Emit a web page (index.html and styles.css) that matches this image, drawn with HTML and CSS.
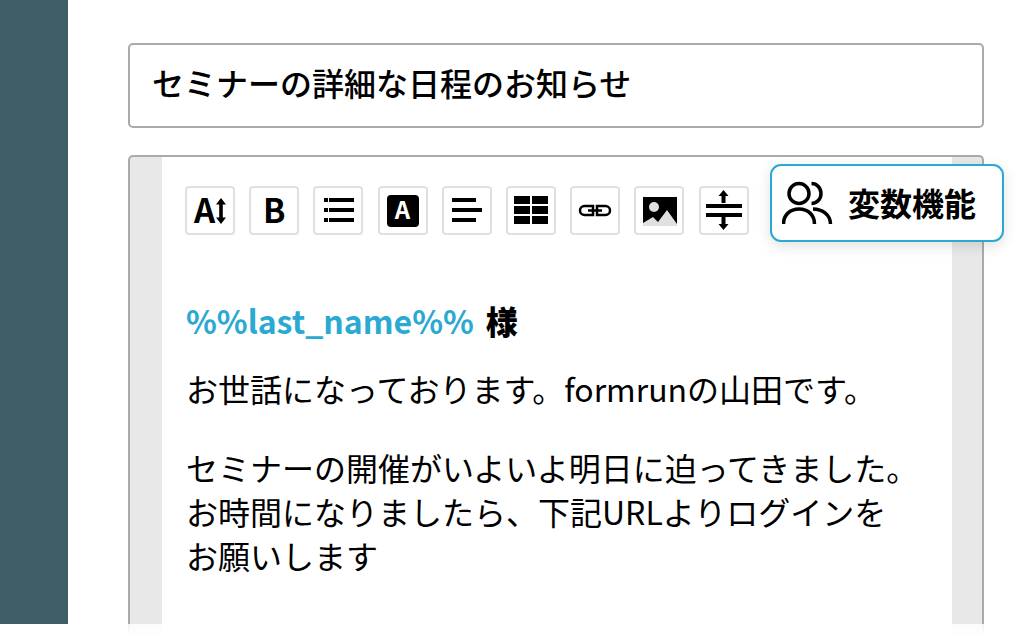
FILE: index.html
```html
<!DOCTYPE html>
<html lang="ja">
<head>
<meta charset="utf-8">
<title>formrun</title>
<link rel="stylesheet" href="styles.css">
</head>
<body>
<div class="page">
  <aside class="sidebar"></aside>
  <main class="main">
    <div class="subject">セミナーの詳細な日程のお知らせ</div>
    <section class="editor">
      <div class="sheet">
        <div class="toolbar">
          <button class="tool tool-size"><span class="glyph">A</span><svg class="arrow" viewBox="0 0 10 26" width="10" height="26"><path d="M5 0 10 6.500H6.800V19.500H10L5 26 0 19.500H3.200V6.500H0Z"/></svg></button>
          <button class="tool tool-bold"><span class="glyph">B</span></button>
          <button class="tool"><svg viewBox="315 188 46 45" width="46" height="45"><path d="M324 198h4v4h-4zM329 198h25v4h-25zM324 208h4v4h-4zM329 208h25v4h-25zM324 218h4v4h-4zM329 218h25v4h-25z"/></svg></button>
          <button class="tool"><span class="badge">A</span></button>
          <button class="tool"><svg viewBox="444 188 46 45" width="46" height="45"><path d="M452 198h24v4h-24zM452 208h30v4h-30zM452 218h24v4h-24z"/></svg></button>
          <button class="tool"><svg viewBox="508 188 46 45" width="46" height="45"><path d="M514 196h16v8h-16zM532 196h16v8h-16zM514 206h16v8h-16zM532 206h16v8h-16zM514 216h16v8h-16zM532 216h16v8h-16z"/></svg></button>
          <button class="tool"><svg viewBox="572 188 46 45" width="46" height="45"><path class="line" d="M593 206h-8.500a4.500 4.500 0 0 0 0 9h8.500zM597 206h8.500a4.500 4.500 0 0 1 0 9h-8.500zM588 210.500h14"/></svg></button>
          <button class="tool"><svg viewBox="636 188 46 45" width="46" height="45"><path d="M643 197h34v29h-34z"/><circle class="gray" cx="654" cy="207" r="5"/><path class="gray" d="M643 226v-3l10-6 5 5 9-12 10 14v2z"/></svg></button>
          <button class="tool"><svg viewBox="701 188 46 45" width="46" height="45"><path d="M706 204h36v4h-36zM706 213h36v4h-36zM723.500 190l5 6h-3v7h-4v-7h-3zM723.500 230l5-6h-3v-7h-4v7h-3z"/></svg></button>
        </div>
        <div class="body-text">
          <p class="greeting"><span class="var">%%last_name%%</span><b>様</b></p>
          <p>お世話になっております。formrunの山田です。</p>
          <p class="gap">セミナーの開催がいよいよ明日に迫ってきました。<br>お時間になりましたら、下記URLよりログインを<br>お願いします</p>
        </div>
      </div>
    </section>
  </main>
  <div class="fade"></div>
  <div class="popup">
    <svg viewBox="782 180 52 44" width="52" height="44"><g class="people"><circle cx="799" cy="193.500" r="10"/><path d="M783.500 224c0-9 6.500-15 15.500-15s15.500 6 15.500 15M811.500 183.500c5.500 0 9.500 4.500 9.500 10s-4 10-9.500 10M813 209c9.500 0 17.500 6 17.500 15"/></g></svg>
    <span>変数機能</span>
  </div>
</div>
</body>
</html>
```
FILE: styles.css
```css
* { box-sizing: border-box; }
html, body { margin: 0; padding: 0; }
body {
  width: 1024px;
  height: 640px;
  overflow: hidden;
  background: #fff;
  color: #000;
  font-family: "Noto Sans CJK JP", "Noto Sans", sans-serif;
}
.page {
  position: relative;
  display: flex;
  align-items: flex-start;
  width: 1024px;
  height: 640px;
  overflow: hidden;
}
.sidebar {
  flex: 0 0 68px;
  height: 624px;
  background: #3e5d66;
}
.main {
  flex: 1;
  padding: 43px 40px 0 60px;
}
.subject {
  height: 85px;
  padding-left: 22px;
  border: 2px solid #aaa;
  border-radius: 5px;
  font-size: 32px;
  font-weight: 500;
  line-height: 75px;
}
.editor {
  height: 520px;
  margin-top: 27px;
  padding: 0 30px 0 32px;
  border: 2px solid #aaa;
  border-bottom: 0;
  border-radius: 5px 5px 0 0;
  background: #e8e8e8;
}
.sheet {
  height: 100%;
  padding: 29px 25px 0 23px;
  background: #fff;
}
.toolbar {
  display: flex;
  gap: 14.2px;
}
.tool {
  display: flex;
  flex: 0 0 50px;
  align-items: center;
  justify-content: center;
  height: 49px;
  padding: 0;
  border: 2px solid #e0e0e0;
  border-radius: 4px;
  background: #fff;
  color: #000;
  font-family: "Noto Sans CJK JP", sans-serif;
  font-weight: 700;
}
.tool svg { display: block; fill: #000; }
.tool .gray { fill: #e0e0e0; }
.tool-size { gap: 1px; font-size: 33px; line-height: 1; }
.tool-bold { font-size: 33px; line-height: 1; }
.glyph { margin-top: -2px; }
.badge {
  display: flex;
  align-items: center;
  justify-content: center;
  width: 32px;
  height: 32px;
  padding-bottom: 3px;
  border-radius: 4px;
  background: #000;
  color: #fff;
  font-size: 24px;
  line-height: 1;
}
.tool .line { fill: none; stroke: #000; stroke-width: 2.5; }
.body-text {
  padding-left: 1px;
  font-size: 32px;
  line-height: 44px;
}
.body-text p { margin: 0; }
.greeting {
  margin-top: 63px !important;
  margin-bottom: 24px !important;
  font-weight: 700;
}
.var { color: #2aa9d2; margin-right: 12px; }
.gap { margin-top: 35px !important; }
.fade {
  position: absolute;
  left: 0;
  right: 0;
  top: 624px;
  height: 16px;
  background: linear-gradient(rgba(255,255,255,.85), #fff 80%);
}
.popup {
  position: absolute;
  top: 164px;
  left: 770px;
  display: flex;
  align-items: center;
  gap: 14px;
  width: 234px;
  height: 78px;
  padding-left: 10px;
  padding-bottom: 2px;
  border: 2px solid #2aa9d2;
  border-radius: 11px;
  background: #fff;
  box-shadow: 0 4px 14px rgba(0,0,0,.12);
  font-size: 32px;
  font-weight: 700;
}
.popup svg { display: block; }
.people { fill: none; stroke: #000; stroke-width: 3.5; }
```
